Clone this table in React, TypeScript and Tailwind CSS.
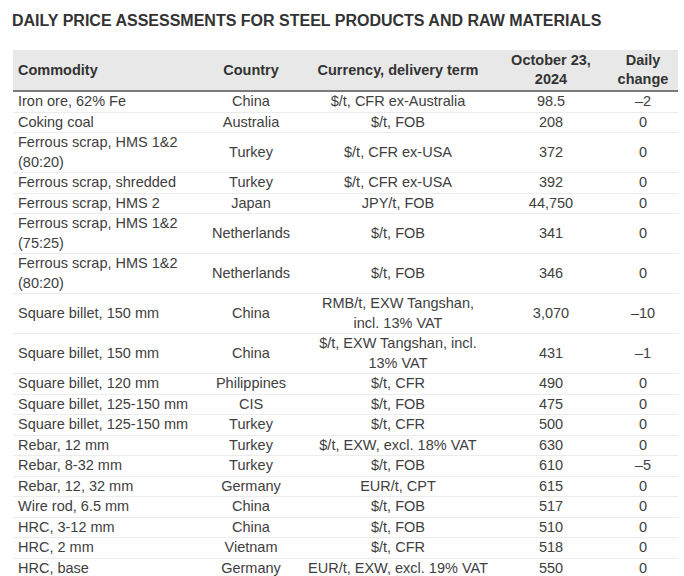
const rows: [string[], string, string[], string, string][] = [
  [["Iron ore, 62% Fe"], "China", ["$/t, CFR ex-Australia"], "98.5", "–2"],
  [["Coking coal"], "Australia", ["$/t, FOB"], "208", "0"],
  [["Ferrous scrap, HMS 1&2", "(80:20)"], "Turkey", ["$/t, CFR ex-USA"], "372", "0"],
  [["Ferrous scrap, shredded"], "Turkey", ["$/t, CFR ex-USA"], "392", "0"],
  [["Ferrous scrap, HMS 2"], "Japan", ["JPY/t, FOB"], "44,750", "0"],
  [["Ferrous scrap, HMS 1&2", "(75:25)"], "Netherlands", ["$/t, FOB"], "341", "0"],
  [["Ferrous scrap, HMS 1&2", "(80:20)"], "Netherlands", ["$/t, FOB"], "346", "0"],
  [["Square billet, 150 mm"], "China", ["RMB/t, EXW Tangshan,", "incl. 13% VAT"], "3,070", "–10"],
  [["Square billet, 150 mm"], "China", ["$/t, EXW Tangshan, incl.", "13% VAT"], "431", "–1"],
  [["Square billet, 120 mm"], "Philippines", ["$/t, CFR"], "490", "0"],
  [["Square billet, 125-150 mm"], "CIS", ["$/t, FOB"], "475", "0"],
  [["Square billet, 125-150 mm"], "Turkey", ["$/t, CFR"], "500", "0"],
  [["Rebar, 12 mm"], "Turkey", ["$/t, EXW, excl. 18% VAT"], "630", "0"],
  [["Rebar, 8-32 mm"], "Turkey", ["$/t, FOB"], "610", "–5"],
  [["Rebar, 12, 32 mm"], "Germany", ["EUR/t, CPT"], "615", "0"],
  [["Wire rod, 6.5 mm"], "China", ["$/t, FOB"], "517", "0"],
  [["HRC, 3-12 mm"], "China", ["$/t, FOB"], "510", "0"],
  [["HRC, 2 mm"], "Vietnam", ["$/t, CFR"], "518", "0"],
  [["HRC, base"], "Germany", ["EUR/t, EXW, excl. 19% VAT"], "550", "0"],
];

const Lines = ({ lines }: { lines: string[] }) => (
  <>
    {lines.map((l, i) => (
      <span key={i} className="block">
        {l}
      </span>
    ))}
  </>
);

export default function App() {
  return (
    <div className="w-[684px] h-[576px] overflow-hidden bg-white font-['Liberation_Sans',Arial,sans-serif] text-[#404040]">
      <h1 className="pl-[12px] pt-[11px] text-[16px] leading-[20px] font-bold text-[#333]">
        DAILY PRICE ASSESSMENTS FOR STEEL PRODUCTS AND RAW MATERIALS
      </h1>
      <table className="ml-[13px] mt-[19px] w-[665px] table-fixed border-collapse text-[14.5px] leading-[19.5px]">
        <colgroup>
          <col className="w-[187px]" />
          <col className="w-[102px]" />
          <col className="w-[192px]" />
          <col className="w-[114px]" />
          <col className="w-[70px]" />
        </colgroup>
        <thead>
          <tr className="h-[41px] bg-[#e8e8e8] border-b-2 border-[#7a7a7a] font-bold text-[#333] leading-[19px]">
            <th className="pl-[5px] text-left font-bold">Commodity</th>
            <th className="text-center font-bold">Country</th>
            <th className="text-center font-bold">Currency, delivery term</th>
            <th className="text-center font-bold">
              <span className="block">October 23,</span>
              <span className="block">2024</span>
            </th>
            <th className="text-center font-bold">
              <span className="block">Daily</span>
              <span className="block">change</span>
            </th>
          </tr>
        </thead>
        <tbody>
          {rows.map(([name, country, term, price, change], i) => (
            <tr key={i} className="border-b border-[#ececec]">
              <td className="pl-[5px] align-middle">
                <Lines lines={name} />
              </td>
              <td className="text-center align-middle">{country}</td>
              <td className="text-center align-middle">
                <Lines lines={term} />
              </td>
              <td className="text-center align-middle">{price}</td>
              <td className="text-center align-middle">{change}</td>
            </tr>
          ))}
        </tbody>
      </table>
    </div>
  );
}
